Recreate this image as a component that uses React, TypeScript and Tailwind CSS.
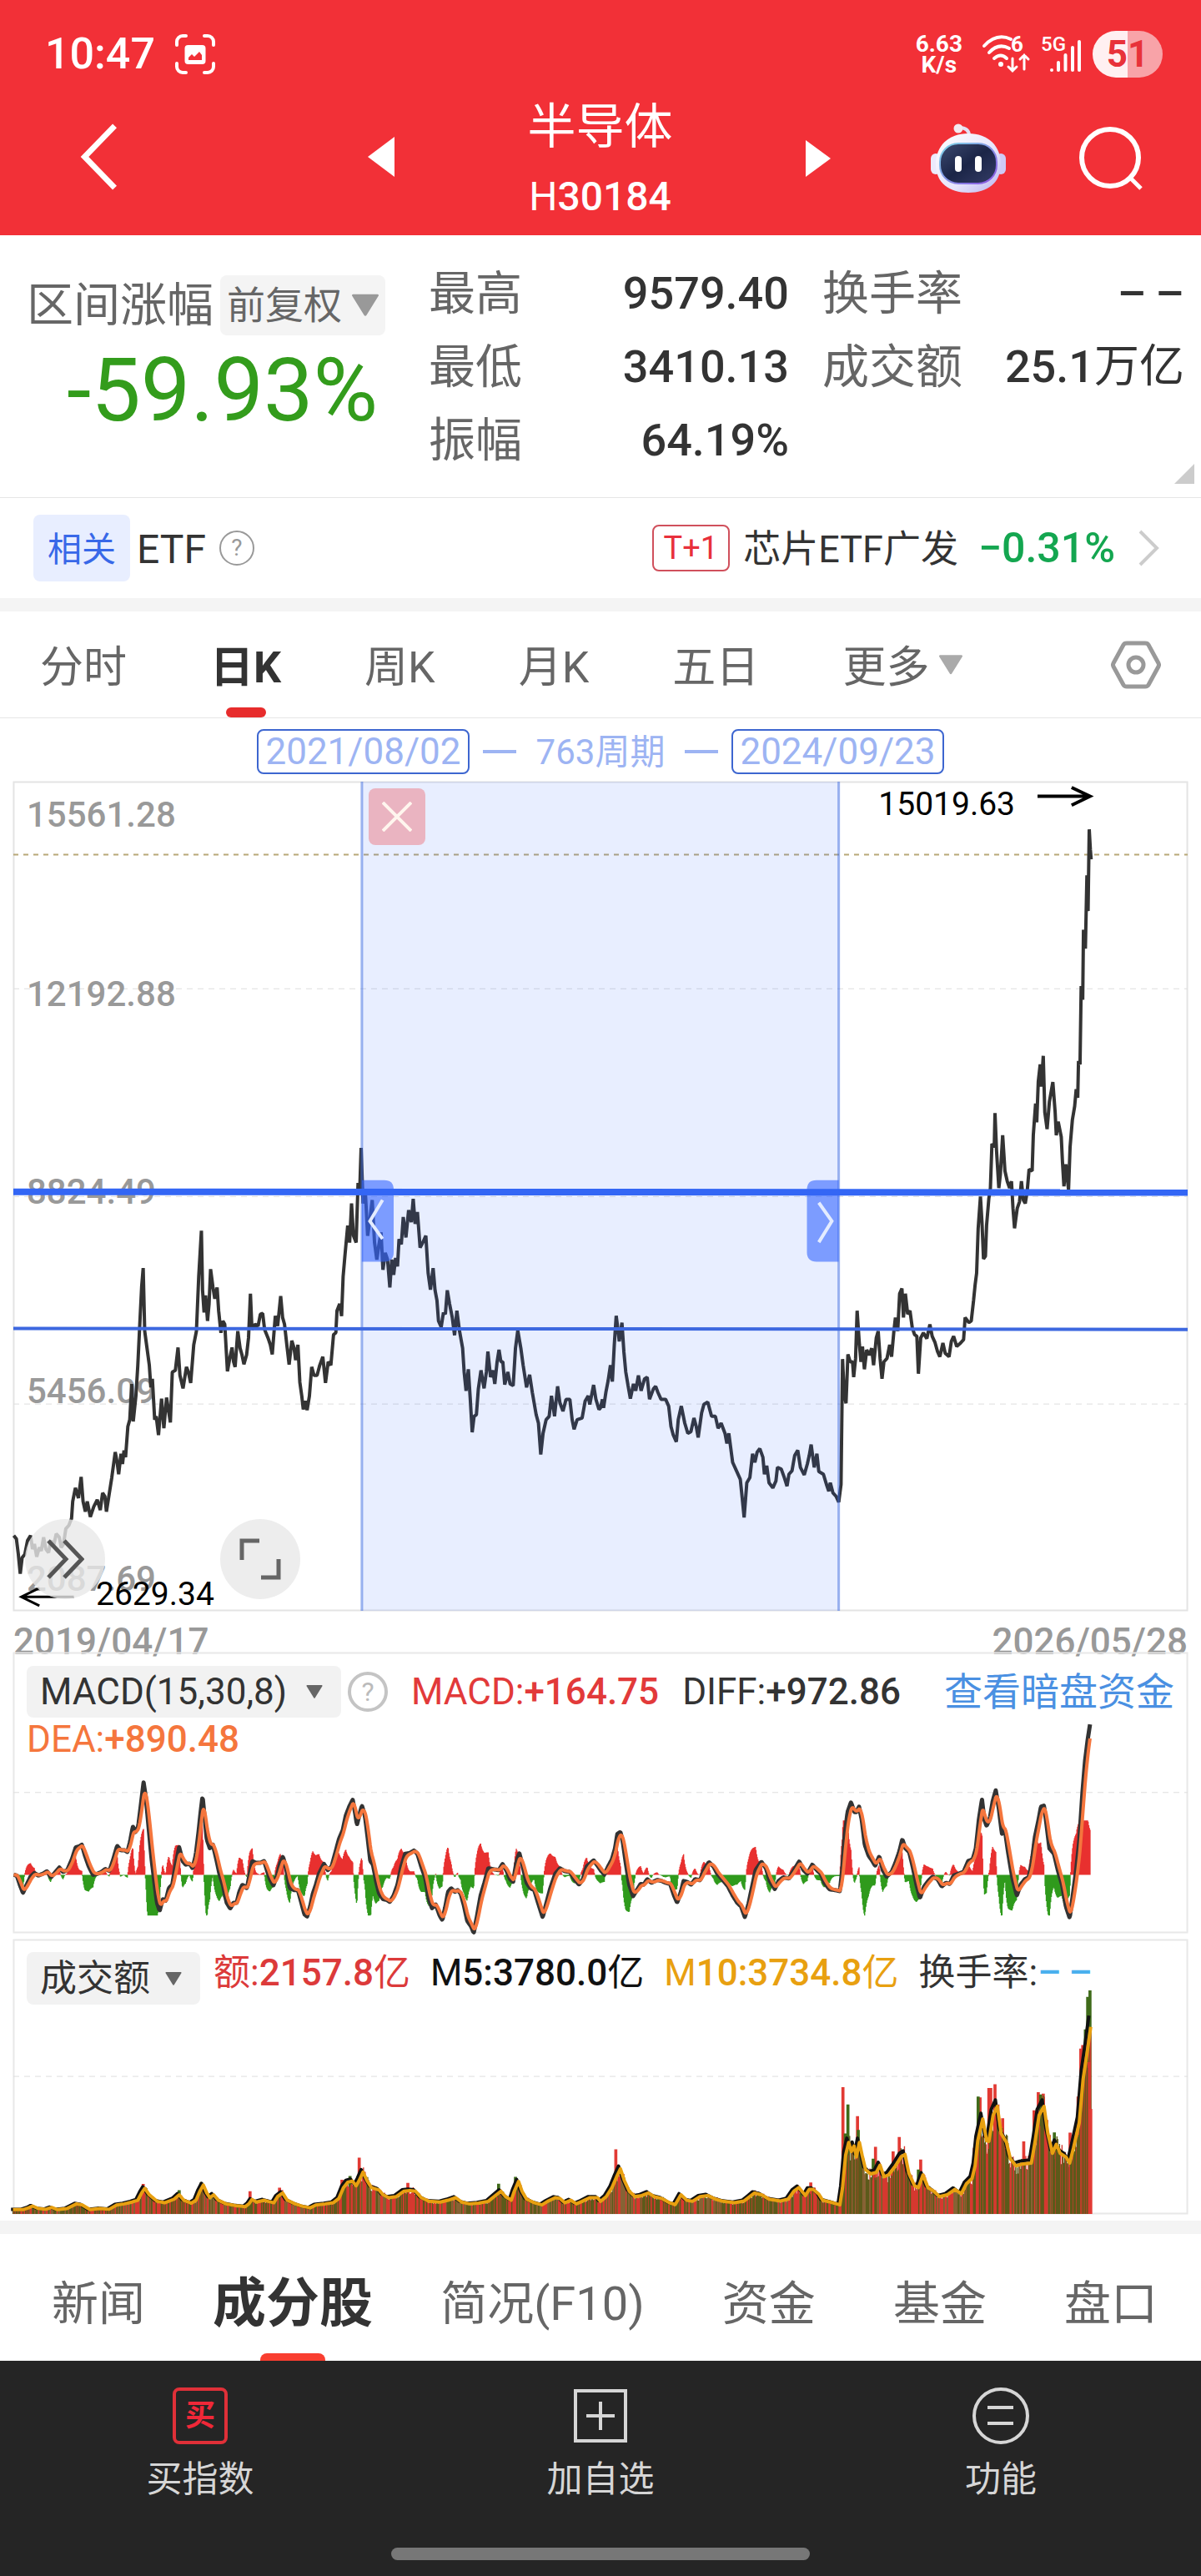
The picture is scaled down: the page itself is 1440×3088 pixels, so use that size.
import React, { useState } from 'react'

type Point = [number, number]

// Second half of every series starts again from zero, so it is shifted by HALF
const HALF = 1568

const parse = (left: string, right: string): Point[] => {
  const read = (s: string, dx: number): Point[] =>
    s.trim().split(/\s+/).map(p => {
      const [x, y] = p.split(',').map(Number)
      return [x + dx, y]
    })
  return [...read(left, 0), ...read(right, HALF)]
}

const price = parse(
  `36,1200 43,1210 48,1255 53,1312 58,1265 65,1255 72,1215 80,1200 85,1240 90,1225 96,1262 103,1235 108,1245 114,1205 120,1240 127,1250 133,1215 140,1230 147,1195 155,1205 160,1235 166,1225 172,1180 180,1170 187,1150 190,1100 197,1060 205,1090 212,1028 217,1100 223,1130 228,1100 236,1145 245,1115 254,1095 262,1125 268,1075 274,1085 278,1130 285,1080 292,1030 301,955 306,985 310,1020 316,960 320,990 324,950 328,970 334,880 339,860 344,755 348,865 355,790 360,700 366,560 370,470 374,415 378,600 384,650 390,700 394,765 398,740 404,860 408,850 414,905 422,798 428,885 435,795 445,868 450,720 458,715 465,648 470,730 478,768 487,705 492,720 498,752 506,640 513,600 519,440 526,305 529,480 533,545 537,495 542,570 546,520 550,418 556,470 561,505 567,472 571,540 577,605 582,570 587,580 594,718 600,680 606,648 610,690 614,705 621,600 627,650 632,670 637,697 644,670 649,620 654,490 658,595 666,580 674,585 680,550 686,548 691,595 700,620 706,640 711,668 719,555 725,585 733,497 738,560 743,580 750,650 755,698 762,628 768,650 772,685 778,640 783,750 788,790 792,830 797,805 802,832 808,790 814,705 820,730 828,730 835,700 843,675 850,752 857,690 864,700 871,610 877,605 880,540 887,520 892,556 896,440 901,375 908,290 913,340 918,225 923,320 930,340 935,165 939,200 943,62 948,225 954,190 960,320 965,280 972,215 978,340 984,390 989,350 995,310 1000,420 1006,370 1012,390 1018,472 1023,390 1028,435 1033,385 1038,410 1042,330 1048,345 1053,265 1060,325 1067,245 1074,280 1079,212 1084,285 1090,250 1097,355 1104,340 1112,320 1118,430 1124,478 1131,415 1136,480 1141,510 1145,570 1152,588 1158,545 1163,550 1168,480 1174,520 1181,560 1187,612 1193,540 1200,600 1208,650 1212,720 1217,775 1223,712 1228,800 1233,897 1238,850 1244,845 1249,770 1256,715 1264,768 1270,720 1274,660 1281,735 1287,715 1292,755 1298,690 1303,655 1308,690 1313,690 1318,757 1326,720 1332,755 1340,760 1346,650 1352,598 1360,650 1366,700 1375,765 1383,728 1390,780 1400,845 1406,870 1412,962 1418,900 1426,860 1434,850 1440,790 1448,850 1456,762 1462,810 1470,835 1478,800 1488,800 1494,860 1499,888 1507,860 1520,855 1528,805 1536,790 1540,815 1550,758 1556,800 1564,830`,
  `0,825 5,800 8,825 14,780 20,745 26,700 31,748 36,640 41,555 46,600 49,630 56,575 61,660 66,720 72,760 78,798 86,755 92,775 99,730 106,775 115,740 122,735 128,800 138,770 144,762 150,780 158,800 170,800 178,820 184,880 190,905 198,925 203,860 211,820 220,870 228,900 236,895 244,855 250,880 255,912 264,840 270,815 280,808 290,850 300,850 307,885 315,870 325,900 330,930 335,900 345,985 355,1010 365,1035 370,1090 375,1147 382,1045 390,1030 397,960 403,985 409,955 416,945 424,970 428,1020 434,995 440,1045 450,1060 458,1040 462,1000 472,1005 480,1030 487,1055 492,1020 500,1010 507,965 515,950 522,1000 532,1022 540,990 545,965 550,933 558,1000 565,960 570,1012 582,1020 590,1050 596,1070 600,1045 607,1075 615,1085 622,1102 628,1050 632,682 636,780 641,812 646,668 652,690 658,690 661,735 666,680 670,540 676,640 680,690 684,645 689,712 695,655 702,670 708,650 713,700 720,620 725,600 730,680 735,740 740,690 748,680 755,640 760,675 766,600 770,560 776,600 781,490 787,475 791,560 796,490 802,550 808,540 814,590 820,610 826,615 830,725 836,620 843,605 852,622 860,580 866,615 873,632 880,660 886,675 894,635 900,665 910,675 916,630 922,615 930,645 940,635 948,625 952,560 962,575 968,570 974,510 978,465 982,430 986,300 992,205 996,280 1000,388 1005,380 1008,290 1014,210 1018,180 1022,50 1028,60 1030,-40 1034,70 1040,180 1044,140 1050,25 1056,130 1062,160 1068,180 1073,160 1077,240 1081,298 1088,240 1094,220 1099,160 1104,215 1109,225 1114,190 1119,125 1127,130 1130,25 1136,-68 1139,-13 1143,-133 1148,-183 1151,-118 1156,-208 1160,-43 1166,7 1172,-73 1181,-131 1187,-43 1190,25 1195,-15 1203,30 1206,100 1210,175 1215,110 1222,185 1226,60 1232,-20 1238,-60 1242,-110 1246,-85 1248,-193 1252,-183 1255,-413 1259,-373 1261,-578 1266,-523 1270,-738 1273,-633 1276,-873 1279,-813 1281,-785`
)

const diff = parse(
  `36,613 44,615 52,640 60,663 70,640 80,618 90,608 100,615 112,610 123,603 133,620 143,608 155,593 165,605 176,600 188,570 198,537 206,535 214,530 222,560 232,590 243,613 255,610 265,605 275,597 286,602 296,570 306,533 315,545 325,545 333,550 340,520 347,480 354,495 361,480 368,420 375,358 381,400 388,480 396,570 404,640 410,690 417,712 425,680 433,685 441,650 450,640 458,590 468,537 477,575 485,585 495,582 503,595 511,560 518,500 524,440 529,396 534,450 540,515 548,540 556,530 565,570 573,610 582,640 592,690 601,706 610,690 618,690 625,660 633,640 645,650 652,610 659,575 668,580 680,580 690,575 697,600 705,625 714,642 725,610 732,580 739,563 748,600 757,650 768,655 778,655 787,690 795,722 802,728 810,700 817,665 825,640 833,610 846,583 856,600 866,590 875,555 885,515 895,490 903,450 912,425 921,406 927,440 932,475 938,450 945,422 953,450 960,510 967,575 974,585 982,630 990,665 1000,680 1010,682 1018,688 1028,670 1038,640 1048,590 1058,555 1070,553 1081,546 1090,555 1100,590 1110,620 1120,680 1128,705 1138,695 1148,725 1155,738 1163,700 1170,660 1178,650 1188,660 1195,655 1203,665 1212,700 1220,740 1230,755 1237,773 1245,730 1255,670 1265,635 1275,595 1290,598 1303,600 1312,583 1322,600 1332,625 1340,632 1348,580 1356,553 1365,590 1375,635 1385,650 1395,655 1405,690 1417,730 1427,690 1437,650 1450,610 1462,595 1475,603 1488,605 1500,625 1512,640 1522,625 1532,590 1550,573 1562,590`,
  `0,600 10,612 20,590 30,570 38,540 44,500 52,495 58,520 66,580 75,640 85,672 95,655 105,638 113,640 122,625 133,635 148,627 160,630 170,635 182,638 192,670 200,690 210,660 217,630 227,633 237,640 247,625 260,628 270,600 283,578 295,590 305,610 320,628 333,645 345,670 357,690 367,700 377,730 387,690 397,640 405,600 420,577 432,595 442,630 455,652 465,630 477,620 492,623 505,600 519,576 530,600 540,610 553,585 565,600 575,610 585,635 598,653 612,655 625,658 631,600 637,510 645,440 654,413 663,440 668,440 675,425 682,460 690,530 700,560 710,575 717,588 728,562 737,600 747,618 760,605 770,580 780,550 788,515 796,540 806,550 815,590 825,640 834,677 845,645 856,630 867,618 880,625 891,645 902,635 912,638 922,615 935,610 948,605 960,575 972,570 980,540 988,460 996,405 1002,460 1008,478 1016,460 1024,410 1032,380 1040,430 1048,500 1056,490 1064,550 1075,620 1087,670 1097,640 1108,625 1118,620 1126,580 1134,510 1144,460 1150,425 1158,422 1164,470 1172,540 1184,555 1194,600 1205,640 1215,700 1225,732 1233,670 1242,600 1250,520 1258,390 1265,300 1272,240 1279,192`
)

const turnover = parse(
  `34,1541 60,1541 75,1536 85,1531 100,1538 120,1540 135,1535 150,1541 175,1538 200,1525 215,1528 235,1541 260,1538 285,1540 305,1528 325,1525 345,1520 360,1515 370,1495 378,1482 390,1500 410,1518 430,1522 455,1512 468,1500 480,1515 500,1523 512,1515 522,1490 531,1473 540,1495 548,1508 558,1500 570,1515 590,1525 615,1530 640,1533 650,1525 658,1513 670,1520 690,1515 700,1518 715,1522 725,1505 738,1495 750,1515 770,1525 790,1532 810,1536 825,1528 850,1525 870,1522 885,1510 897,1480 908,1465 920,1462 930,1475 938,1460 948,1437 958,1460 970,1480 990,1487 1000,1500 1015,1508 1035,1505 1055,1490 1070,1488 1085,1490 1100,1508 1120,1518 1150,1520 1170,1515 1190,1508 1205,1520 1225,1525 1250,1523 1275,1518 1290,1505 1308,1490 1320,1505 1335,1515 1343,1490 1354,1463 1363,1490 1375,1512 1395,1522 1415,1528 1430,1518 1450,1508 1462,1510 1475,1522 1490,1515 1505,1525 1520,1518 1540,1508 1560,1508`,
  `0,1518 15,1505 30,1480 42,1450 52,1428 62,1460 75,1490 90,1505 105,1503 125,1495 140,1505 160,1510 180,1522 195,1527 210,1500 225,1515 240,1518 260,1505 280,1502 300,1512 320,1518 350,1522 375,1517 390,1505 402,1495 420,1500 440,1512 470,1517 490,1512 505,1490 518,1480 535,1502 545,1485 555,1485 570,1498 580,1515 600,1520 625,1528 632,1480 640,1390 648,1355 655,1380 662,1365 668,1395 676,1355 683,1390 692,1430 705,1442 720,1438 730,1418 740,1450 752,1445 770,1420 785,1395 795,1388 805,1440 820,1475 830,1480 842,1445 855,1480 870,1490 885,1505 905,1500 925,1485 942,1497 955,1470 970,1455 978,1420 985,1350 998,1290 1008,1350 1014,1352 1025,1280 1036,1255 1046,1330 1060,1355 1070,1400 1085,1420 1100,1415 1125,1412 1135,1350 1145,1280 1158,1255 1168,1330 1180,1385 1190,1360 1200,1385 1215,1395 1225,1412 1235,1370 1250,1300 1260,1180 1270,1110 1280,1035`
)

// Single days that stand out of the average: x, top, rising
const spikes: [number, number, boolean][] = [
  [374, 1470, true], [468, 1487, false], [526, 1465, false], [653, 1490, true], [730, 1480, true],
  [893, 1458, true], [914, 1448, false], [938, 1397, true], [1065, 1467, true], [1302, 1469, false],
  [1346, 1450, false], [1608, 1374, true], [2117, 1466, true], [2201, 1202, true], [2214, 1250, false],
  [2207, 1330, false], [2239, 1282, true], [2241, 1320, false], [2286, 1367, true], [2280, 1400, false],
  [2332, 1380, true], [2348, 1340, true], [2404, 1402, true], [2398, 1430, false], [2544, 1370, true],
  [2554, 1228, false], [2559, 1230, true], [2582, 1204, true], [2587, 1204, true], [2598, 1194, true],
  [2618, 1288, true], [2673, 1352, true], [2700, 1266, true], [2711, 1216, true], [2717, 1222, false],
  [2724, 1220, true], [2753, 1327, false], [2794, 1328, true], [2815, 1228, true], [2822, 1095, true],
  [2827, 1085, true], [2834, 1042, false], [2840, 952, false], [2846, 934, false],
]

const toPath = (pts: Point[]) => 'M' + pts.map(p => p.join(' ')).join('L')

const resample = (pts: Point[], step: number): Point[] => {
  const out: Point[] = []
  let i = 0
  for (let x = pts[0][0]; x <= pts[pts.length - 1][0]; x += step) {
    while (i < pts.length - 2 && pts[i + 1][0] < x) i++
    const [x0, y0] = pts[i]
    const [x1, y1] = pts[i + 1]
    out.push([x, y0 + ((y1 - y0) * (x - x0)) / (x1 - x0)])
  }
  return out
}

// Signal line: 8 day EMA of the DIFF line
const ZERO = 613
const diffDaily = resample(diff, 1.63)
const dea: Point[] = []
diffDaily.forEach(([x, y], i) => {
  const prev = i ? dea[i - 1][1] : y
  dea.push([x, prev + (y - prev) * 0.25])
})

const histogram = (rising: boolean) =>
  diffDaily
    .map(([x, y], i) => {
      const h = Math.max(-112, Math.min(150, (dea[i][1] - y) * 3.2))
      return h > 0 === rising ? `M${x.toFixed(1)} ${ZERO}V${(ZERO - h).toFixed(1)}` : ''
    })
    .join('')

const BASE = 1553
const noise = (i: number) => {
  const v = Math.sin(i * 12.9898) * 43758.5453
  return v - Math.floor(v)
}

const volumeBars = (rising: boolean) =>
  resample(turnover, 2.2)
    .map(([x, y], i) => {
      if (noise(i) > 0.48 !== rising) return ''
      const h = (BASE - y) * (0.82 + noise(i + 500) * 0.34)
      return `M${x.toFixed(1)} ${BASE}V${(BASE - h).toFixed(1)}`
    })
    .join('')

const spikeBars = (rising: boolean) =>
  spikes.filter(s => s[2] === rising).map(s => `M${s[0]} ${BASE}V${s[1]}`).join('')

const m5 = turnover.map(([x, y]): Point => [x - 5, BASE - (BASE - y) * 1.06])

const Caret: React.FC<{ className: string }> = ({ className }) => (
  <svg viewBox="0 0 24 20" className={className} fill="currentColor" aria-hidden="true">
    <path d="M1 0h22a1 1 0 0 1 .8 1.6L13 19a1.2 1.2 0 0 1-2 0L.2 1.6A1 1 0 0 1 1 0z" />
  </svg>
)

interface PickerProps {
  label: string
  value: string
  className: string
  caretClass: string
}

const Picker: React.FC<PickerProps> = ({ label, value, className, caretClass }) => (
  <label className={`flex items-center rounded-lg ${className}`}>
    <select aria-label={label} className="h-full appearance-none bg-transparent outline-none" defaultValue={value}>
      <option>{value}</option>
    </select>
    <Caret className={caretClass} />
  </label>
)

const StatusBar = () => (
  <div className="flex h-[130px] items-center pl-[54px] pr-[46px]">
    <span className="text-[52px] font-medium leading-[64px]">10:47</span>
    <svg viewBox="0 0 48 48" className="ml-6 h-12 w-12" fill="none" stroke="white" strokeWidth="4" strokeLinecap="round">
      <path d="M2 13V9a7 7 0 0 1 7-7h4M35 2h4a7 7 0 0 1 7 7v4M46 35v4a7 7 0 0 1-7 7h-4M13 46H9a7 7 0 0 1-7-7v-4" />
      <rect x="11.500" y="13" width="25" height="23" rx="4" fill="white" stroke="none" />
      <path d="M16 31v-3l4-4 3 3 6-6 3 4v6z" fill="#f23037" stroke="none" />
    </svg>
    <div className="ml-auto flex items-center">
      <div className="text-center text-[28px] font-bold leading-[25px]">
        6.63
        <br />
        K/s
      </div>
      <svg viewBox="0 0 58 46" className="ml-6 h-[46px] w-[58px] overflow-visible" fill="none" stroke="white" strokeWidth="4" strokeLinecap="round">
        <path d="M2 13Q17-3 34 5M8 21Q19 9 32 16M14 28q8-7 15 0" />
        <circle cx="22" cy="35" r="3" fill="white" stroke="none" />
        <path d="M36 28v15m-5-5 5 5 5-5M50 41V24m-5 5 5-5 5 5" strokeWidth="3" />
        <text x="34" y="20" fill="white" stroke="none" className="text-[26px] font-bold">6</text>
      </svg>
      <svg viewBox="0 0 50 46" className="ml-3 h-[46px] w-[50px] overflow-visible" fill="none" stroke="white" strokeWidth="4" strokeLinecap="round">
        <path d="M13 42v0M21 42V33M29.500 42V24M38 42V15M46 42V8" />
        <text x="0" y="19" fill="white" stroke="none" className="text-[24px] font-medium">5G</text>
      </svg>
      <span className="ml-3 flex h-14 w-[84px] items-center justify-center rounded-full bg-[linear-gradient(90deg,#fff0f1_50%,#f8a3a8_50%)] text-[44px] font-bold text-[#e8323a]">
        51
      </span>
    </div>
  </div>
)

const Robot = () => (
  <svg viewBox="0 0 90 84" className="h-[84px] w-[90px]" aria-hidden="true">
    <defs>
      <linearGradient id="shell" x1="0" y1="0" x2="1" y2="1">
        <stop offset="0" stopColor="#ffffff" />
        <stop offset="0.600" stopColor="#e6e4fb" />
        <stop offset="1" stopColor="#b9b3ee" />
      </linearGradient>
      <linearGradient id="visor" x1="0" y1="0" x2="1" y2="1">
        <stop offset="0" stopColor="#3d4a70" />
        <stop offset="0.500" stopColor="#1b2547" />
        <stop offset="1" stopColor="#343c66" />
      </linearGradient>
      <linearGradient id="rim" x1="0" y1="0" x2="1" y2="1">
        <stop offset="0" stopColor="#7fd8e8" />
        <stop offset="1" stopColor="#8a4fe0" />
      </linearGradient>
    </defs>
    <path d="M34 5q12 0 12 10" fill="none" stroke="#e3e0f5" strokeWidth="4" />
    <circle cx="33" cy="6" r="5.500" fill="#f3e9f0" />
    <rect x="0" y="36" width="12" height="25" rx="6" fill="#eceafd" />
    <rect x="78" y="36" width="12" height="25" rx="6" fill="#cfcaf5" />
    <path d="M45 12c24 0 39 15 39 37S68 83 45 83 6 71 6 49s15-37 39-37z" fill="url(#shell)" />
    <rect x="11" y="24" width="68" height="48" rx="22" fill="url(#visor)" stroke="url(#rim)" strokeWidth="2" />
    <rect x="29" y="39" width="8" height="19" rx="4" fill="white" />
    <rect x="53" y="39" width="8" height="19" rx="4" fill="white" />
  </svg>
)

const TitleBar = () => (
  <div className="flex items-start justify-between pl-24 pr-[70px]">
    <div className="flex w-[377px] items-center justify-between pt-[18px]">
      <button aria-label="返回">
        <svg viewBox="0 0 46 82" className="h-20 w-[46px]" fill="none" stroke="white" strokeWidth="7">
          <path d="M42 3 5 41l37 38" />
        </svg>
      </button>
      <button aria-label="上一个">
        <svg viewBox="0 0 32 48" className="h-12 w-8" fill="white"><path d="M32 0v48L0 24z" /></svg>
      </button>
    </div>
    <h1 className="text-center">
      <span className="block text-[58px] font-normal leading-[44px]">半导体</span>
      <span className="mt-5 block text-[48px] leading-[84px]">
        H<span className="font-medium">30184</span>
      </span>
    </h1>
    <div className="flex w-[404px] items-center justify-between pt-[18px]">
      <button aria-label="下一个">
        <svg viewBox="0 0 30 44" className="h-11 w-[30px]" fill="white"><path d="M0 0v44l30-22z" /></svg>
      </button>
      <div className="flex items-center gap-[88px]">
        <button aria-label="智能助手"><Robot /></button>
        <button aria-label="搜索">
          <svg viewBox="0 0 76 76" className="h-[76px] w-[76px]" fill="none" stroke="white" strokeWidth="6">
            <circle cx="37" cy="37" r="34" />
            <path d="m60 60 14 14" strokeWidth="5" />
          </svg>
        </button>
      </div>
    </div>
  </div>
)

const stats = [
  ['最高', '9579.40', '换手率', '–\u2009–'],
  ['最低', '3410.13', '成交额', '25.1万亿'],
  ['振幅', '64.19%', '', ''],
]

const Quote = () => (
  <section className="relative flex border-b border-[#e6e6e6] pb-6 pl-8 pr-5 pt-[26px]">
    <div className="w-[482px] pt-[22px]">
      <div className="flex items-center gap-2 text-[#666]">
        <h2 className="text-[56px] leading-[72px]">区间涨幅</h2>
        <Picker
          label="复权方式"
          value="前复权"
          className="h-[72px] gap-3 bg-[#f4f4f4] px-2 text-[46px]"
          caretClass="h-7 w-8 text-[#999]"
        />
      </div>
      <p className="mt-1 pl-12 text-[106px] leading-[124px] text-[#339c1c]">-59.93%</p>
    </div>
    <table className="flex-1 text-[54px] leading-[88px] text-[#333]">
      <tbody>
        {stats.map(([a, av, b, bv]) => (
          <tr key={a}>
            <th className="text-left text-[56px] font-normal text-[#666]">{a}</th>
            <td className="text-right font-medium">{av}</td>
            <th className="w-[212px] pl-10 text-left text-[56px] font-normal text-[#666]">{b}</th>
            <td className="w-[262px] text-right font-medium">
              {bv.replace('万亿', '')}
              {bv.endsWith('万亿') && <span className="font-normal">万亿</span>}
            </td>
          </tr>
        ))}
      </tbody>
    </table>
    <svg viewBox="0 0 24 24" className="absolute bottom-4 right-2 h-6 w-6" fill="#ccc"><path d="M24 0v24H0z" /></svg>
  </section>
)

const Related = () => (
  <section className="flex h-[120px] items-center pl-10 pr-[49px]">
    <span className="rounded-lg bg-[#e8eeff] px-[17px] pt-1 text-[41px] leading-[76px] text-[#3868e8]">相关</span>
    <span className="ml-2 pt-1 text-[48px] text-[#333]">ETF</span>
    <button className="ml-4 h-[42px] w-[42px] rounded-full border-2 border-[#999] text-[28px] leading-none text-[#999]">?</button>
    <a href="#etf" className="ml-auto flex items-center">
      <span className="rounded-lg border-2 border-[#d0505c] px-3 text-[38px] leading-[52px] text-[#e8303c]">T+1</span>
      <span className="ml-4 pt-1 text-[45px] text-[#333]">芯片ETF广发</span>
      <span className="ml-6 text-[50px] font-medium leading-[60px] text-[#14a650]">−0.31%</span>
      <svg viewBox="0 0 26 44" className="ml-7 h-11 w-[26px]" fill="none" stroke="#ccc" strokeWidth="4"><path d="m2 2 20 20L2 42" /></svg>
    </a>
  </section>
)

const periods = ['分时', '日K', '周K', '月K', '五日']

const PeriodTabs = () => {
  const [active, setActive] = useState('日K')

  return (
    <nav className="flex h-32 border-b border-[#e6e6e6] pl-12 pr-12 text-[52px] text-[#666]">
      <div className="flex gap-[100px]">
        {periods.map(p => (
          <button key={p} onClick={() => setActive(p)} className={`relative pt-2 ${p === active ? 'font-bold text-[#333]' : ''}`}>
            {p}
            {p === active && <span className="absolute bottom-0 left-1/2 h-3 w-12 -translate-x-1/2 rounded-full bg-[#e72c2c]" />}
          </button>
        ))}
        <button className="flex items-center gap-3 pt-2" aria-haspopup="menu">
          更多
          <Caret className="mb-2 h-6 w-7 text-[#aaa]" />
        </button>
      </div>
      <button className="ml-auto" aria-label="设置">
        <svg viewBox="0 0 60 58" className="h-[58px] w-[60px]" fill="none" stroke="#999" strokeWidth="5" strokeLinejoin="round">
          <path d="M19 3h22q3 0 4 2l12 22q1 2 0 4L45 53q-1 2-4 2H19q-3 0-4-2L3 31q-1-2 0-4L15 5q1-2 4-2z" />
          <circle cx="30" cy="29" r="9" />
        </svg>
      </button>
    </nav>
  )
}

const RangeBar = () => (
  <div className="flex h-[76px] items-center justify-center pt-1 text-[44px] text-[#9db4f3]">
    <button className="rounded-lg border-2 border-[#3d66d0] px-2 leading-[50px]">2021/08/02</button>
    <span className="ml-4 h-1 w-10 bg-current" />
    <span className="mx-6 text-[42px]">763周期</span>
    <span className="mr-4 h-1 w-10 bg-current" />
    <button className="rounded-lg border-2 border-[#3d66d0] px-2 leading-[50px]">2024/09/23</button>
  </div>
)

const line = 'fill-none [vector-effect:non-scaling-stroke]'

const PriceChart = () => (
  <div className="relative mx-4 text-[42px] font-medium leading-[48px] text-[#999]">
    <svg viewBox="35 -1013 3066 2434" preserveAspectRatio="none" className="block h-[994px] w-full overflow-visible">
      <rect x="36" y="-1012" width="3064" height="2432" stroke="#e4e4e4" strokeWidth="2" className={line} />
      <path d="M35-405H3101M35 205H3101M35 814H3101" stroke="#dedede" strokeWidth="1" strokeDasharray="7 6" className={line} />
      <path d="M35-799H3101" stroke="#b8a878" strokeWidth="2" strokeDasharray="6 6" className={line} />
    </svg>
    <span className="absolute left-4 top-4">15561.28</span>
    <span className="absolute left-4 top-[231px]">12192.88</span>
    <span className="absolute left-4 top-[468px]">8824.49</span>
    <span className="absolute left-4 top-[707px]">5456.09</span>
    <span className="absolute left-4 top-[932px]">2087.69</span>
    <svg viewBox="35 -1013 3066 2434" preserveAspectRatio="none" className="absolute inset-0 h-full w-full overflow-visible">
      <path d={toPath(price)} stroke="#333" strokeWidth="4" strokeLinejoin="bevel" className={line} />
      <rect x="945" y="-1013" width="1245" height="2434" fill="#3060ff" fillOpacity="0.110" />
      <path d="M945-1013V1421M2190-1013V1421" stroke="#3b69e0" strokeOpacity="0.500" strokeWidth="3" className={line} />
      <path d="M945 157h58q25 0 25 28v183q0 28-25 28h-58z" fill="#3366ff" fillOpacity="0.600" />
      <path d="M2190 157h-58q-25 0-25 28v183q0 28 25 28h58z" fill="#3366ff" fillOpacity="0.600" />
      <path d="m999 215-33 62 33 52M2138 223l34 54-34 62" stroke="#e4ecff" strokeWidth="4" className={line} />
      <path d="M35 191 3101 193" stroke="#3366f5" strokeWidth="8" className={line} />
      <path d="M35 592 3101 595" stroke="#3d68e0" strokeWidth="4" className={line} />
      <path d="M2709-970H2844M2798-996 2846-970 2798-944" stroke="#000" strokeWidth="4" className={line} />
      <path d="M193 1380H56M103 1354 56 1380 103 1406" stroke="#000" strokeWidth="3" className={line} />
    </svg>
    <span className="absolute right-[14.700%] top-0 text-[39px] font-normal leading-[54px] text-black">15019.63</span>
    <button aria-label="放大" className="absolute left-[14px] top-[884px] flex h-24 w-24 items-center justify-center rounded-full bg-[#e8e8e8]/80">
      <svg viewBox="0 0 46 48" className="h-12 w-[46px]" fill="none" stroke="#555" strokeWidth="5"><path d="m3 2 21 22L3 46M22 2l21 22-21 22" /></svg>
    </button>
    <span className="absolute left-[99px] top-[950px] text-[39px] font-normal text-black">2629.34</span>
    <button aria-label="全屏" className="absolute left-[248px] top-[884px] flex h-24 w-24 items-center justify-center rounded-full bg-[#e8e8e8]/80">
      <svg viewBox="0 0 50 50" className="h-[50px] w-[50px]" fill="none" stroke="#666" strokeWidth="5"><path d="M3 26V3h21M26 47h21V25" /></svg>
    </button>
    <button aria-label="关闭区间" className="absolute left-[30.250%] top-2 flex h-[68px] w-[68px] items-center justify-center rounded-lg bg-[#eab4c1]">
      <svg viewBox="0 0 36 36" className="h-9 w-9" fill="none" stroke="#fff6ee" strokeWidth="4"><path d="m1 1 34 34M35 1 1 35" /></svg>
    </button>
  </div>
)

const MacdChart = () => (
  <div className="relative mx-4 mb-2">
    <svg viewBox="35 0 3066 773" preserveAspectRatio="none" className="block h-[336px] w-full overflow-visible">
      <rect x="36" y="1" width="3064" height="771" stroke="#e8e8e8" strokeWidth="2" className={line} />
      <path d="M35 386H3101" stroke="#dedede" strokeWidth="1" strokeDasharray="7 6" className={line} />
      <path d={histogram(true)} stroke="#e8302f" strokeWidth="3" />
      <path d={histogram(false)} stroke="#2f9a1c" strokeWidth="3" />
      <path d={toPath(diffDaily)} stroke="#333" strokeWidth="5" strokeLinejoin="round" className={line} />
      <path d={toPath(dea)} stroke="#f5763d" strokeWidth="4" strokeLinejoin="round" className={line} />
    </svg>
    <div className="absolute inset-x-4 top-4 text-[44px] leading-[52px] text-[#333]">
      <div className="flex h-[62px] items-center">
        <Picker label="指标" value="MACD(15,30,8)" className="h-[62px] gap-5 bg-[#f2f2f2] pl-4 pr-5" caretClass="h-4 w-6 text-[#666]" />
        <button className="ml-2 h-12 w-12 shrink-0 rounded-full border-4 border-[#c4c4c4] text-[32px] leading-none text-[#bbb]">?</button>
        <span className="ml-7 text-[#e23a3a]">MACD:<b className="font-medium">+164.75</b></span>
        <span className="ml-7">DIFF:<b className="font-medium">+972.86</b></span>
        <a href="#funds" className="ml-auto text-[46px] text-[#4a90e2]">查看暗盘资金</a>
      </div>
      <p className="text-[#f5763d]">DEA:<b className="font-medium">+890.48</b></p>
    </div>
  </div>
)

const VolumeChart = () => (
  <div className="relative mx-4 mb-2">
    <svg viewBox="35 793 3066 760" preserveAspectRatio="none" className="block h-[329px] w-full overflow-visible">
      <rect x="36" y="794" width="3064" height="758" stroke="#e8e8e8" strokeWidth="2" className={line} />
      <path d="M35 1172H3101" stroke="#dedede" strokeWidth="1" strokeDasharray="7 6" className={line} />
      <path d={spikeBars(true)} stroke="#e23a34" strokeWidth="8" />
      <path d={spikeBars(false)} stroke="#3f6b1a" strokeWidth="8" />
      <path d={volumeBars(true)} stroke="#d6382f" strokeWidth="3" />
      <path d={volumeBars(false)} stroke="#5c5a1a" strokeWidth="3" />
      <path d={`M2848 ${BASE}V1262`} stroke="#e23a34" strokeWidth="8" />
      <path d={toPath(m5)} stroke="#111" strokeWidth="4" strokeLinejoin="round" className={line} />
      <path d={toPath(turnover)} stroke="#e8a010" strokeWidth="4" strokeLinejoin="round" className={line} />
    </svg>
    <div className="absolute inset-x-4 top-[15px] flex items-start gap-6 text-[44px] leading-[50px] text-[#333]">
      <Picker label="副图" value="成交额" className="-mr-2 h-[63px] gap-4 bg-[#f2f2f2] pl-4 pr-5" caretClass="h-4 w-6 text-[#666]" />
      <span className="text-[#dc3a3a]">额:<b className="font-medium">2157.8</b>亿</span>
      <span className="text-[#111]">M<b className="font-medium">5:3780.0</b>亿</span>
      <span className="text-[#e8a010]">M<b className="font-medium">10:3734.8</b>亿</span>
      <span>换手率:<b className="font-medium text-[#4ab0ee]">{'–\u2009–'}</b></span>
    </div>
  </div>
)

const sections = ['新闻', '成分股', '简况(F10)', '资金', '基金', '盘口']

const SectionTabs = () => {
  const [active, setActive] = useState('成分股')

  return (
    <nav className="flex h-[152px] justify-between pl-[62px] pr-[52px] text-[56px] text-[#666]">
      {sections.map(s => (
        <button
          key={s}
          onClick={() => setActive(s)}
          className={`relative pt-4 ${s === active ? '-mx-3 text-[64px] font-bold text-[#333]' : ''}`}
        >
          {s}
          {s === active && <span className="absolute bottom-0 left-1/2 h-[9px] w-[78px] -translate-x-1/2 rounded-t-lg bg-[#f93e30]" />}
        </button>
      ))}
    </nav>
  )
}

const BottomBar = () => (
  <footer className="bg-[#252525] pb-5 text-[43px] leading-[60px] text-[#d6d6d6]">
    <div className="flex pt-8">
      <button className="flex flex-1 flex-col items-center gap-3">
        <span className="flex h-[68px] w-[66px] items-center justify-center rounded-lg border-4 border-[#e03038] text-[36px] font-bold leading-none text-[#f02838]">
          买
        </span>
        买指数
      </button>
      <button className="flex flex-1 flex-col items-center gap-3">
        <svg viewBox="0 0 68 68" className="h-[68px] w-[68px]" fill="none" stroke="#d6d6d6" strokeWidth="4">
          <path d="M4 4h60v60H4zM34 17v34M17 34h34" />
        </svg>
        加自选
      </button>
      <button className="flex flex-1 flex-col items-center gap-3">
        <svg viewBox="0 0 68 68" className="h-[68px] w-[68px]" fill="none" stroke="#d6d6d6" strokeWidth="4">
          <circle cx="34" cy="34" r="32" />
          <path d="M18 24h31M18 43h31" />
        </svg>
        功能
      </button>
    </div>
    <div className="mx-auto mt-[52px] h-[15px] w-[502px] rounded-full bg-[#777]" />
  </footer>
)

export default function App() {
  return (
    <div className="min-h-screen bg-white font-['Roboto','Noto_Sans_CJK_SC',sans-serif]">
      <header className="bg-[#f23037] pb-1 text-white">
        <StatusBar />
        <TitleBar />
      </header>
      <Quote />
      <Related />
      <div className="h-4 bg-[#f4f4f4]" />
      <PeriodTabs />
      <RangeBar />
      <PriceChart />
      <div className="-mb-3 flex justify-between px-4 pt-3 text-[44px] font-medium leading-[50px] text-[#999]">
        <span>2019/04/17</span>
        <span>2026/05/28</span>
      </div>
      <MacdChart />
      <VolumeChart />
      <div className="h-4 bg-[#f4f4f4]" />
      <SectionTabs />
      <BottomBar />
    </div>
  )
}
